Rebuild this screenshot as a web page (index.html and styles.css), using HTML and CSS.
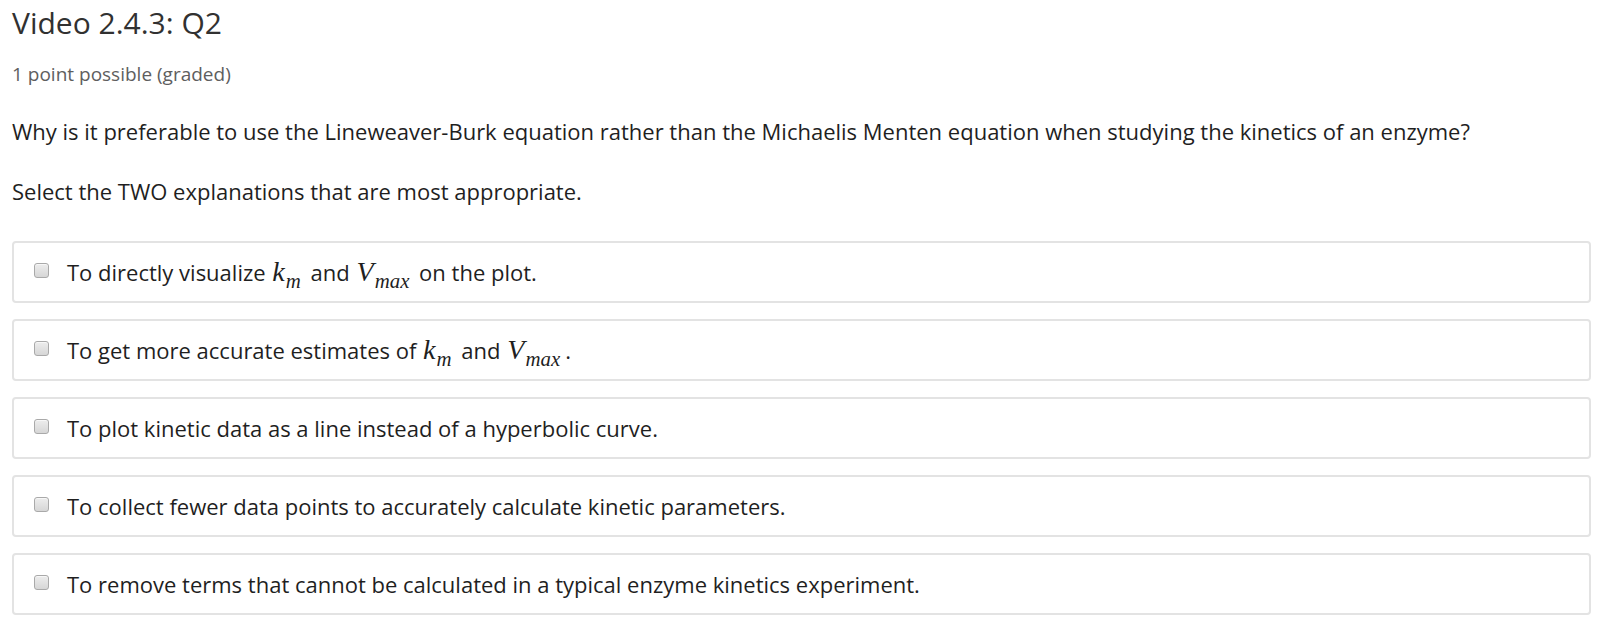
FILE: index.html
```html
<!DOCTYPE html>
<html lang="en">
<head>
<meta charset="utf-8">
<title>Video 2.4.3: Q2</title>
<link rel="stylesheet" href="styles.css">
</head>
<body>
<div class="problem">
  <h3 class="problem-title">Video 2.4.3: Q2</h3>
  <div class="problem-progress">1 point possible (graded)</div>
  <p class="question">Why is it preferable to use the Lineweaver-Burk equation rather than the Michaelis Menten equation when studying the kinetics of an enzyme?</p>
  <p class="question instruction">Select the TWO explanations that are most appropriate.</p>
  <div class="choices">
    <label class="choice"><input type="checkbox" class="check"><span class="choice-text">To directly visualize <span class="math"><i>k</i><sub>m</sub></span> and <span class="math"><i>V</i><sub>max</sub></span> on the plot.</span></label>
    <label class="choice"><input type="checkbox" class="check"><span class="choice-text">To get more accurate estimates of <span class="math"><i>k</i><sub>m</sub></span> and <span class="math"><i>V</i><sub>max</sub></span><span class="math-dot">.</span></span></label>
    <label class="choice"><input type="checkbox" class="check"><span class="choice-text">To plot kinetic data as a line instead of a hyperbolic curve.</span></label>
    <label class="choice"><input type="checkbox" class="check"><span class="choice-text">To collect fewer data points to accurately calculate kinetic parameters.</span></label>
    <label class="choice"><input type="checkbox" class="check"><span class="choice-text">To remove terms that cannot be calculated in a typical enzyme kinetics experiment.</span></label>
  </div>
</div>
</body>
</html>
```

FILE: styles.css
```css
html, body {
  margin: 0;
  padding: 0;
  background: #ffffff;
}

body {
  font-family: "Open Sans", "Liberation Sans", sans-serif;
  color: #313131;
}

.problem {
  padding: 3px 9px 0 12px;
}

.problem-title {
  margin: 0;
  font-size: 30px;
  line-height: 40px;
  font-weight: 400;
  color: #313131;
}

.problem-progress {
  margin-top: 18px;
  font-size: 19px;
  line-height: 26px;
  color: #5e5e5e;
}

.question {
  margin: 29px 0 0;
  font-size: 22px;
  line-height: 30px;
  color: #1f1f1f;
}

.instruction {
  margin-top: 30px;
}

.choices {
  margin-top: 35px;
  display: flex;
  flex-direction: column;
  gap: 16px;
}

.choice {
  display: flex;
  align-items: center;
  height: 58px;
  padding: 0 20px;
  border: 2px solid #e3e3e3;
  border-radius: 4px;
  font-size: 22px;
  color: #1f1f1f;
}

.check {
  appearance: none;
  -webkit-appearance: none;
  box-sizing: border-box;
  width: 15px;
  height: 15px;
  margin: 0 18px 0 0;
  flex: none;
  border: 1px solid #a9a9a9;
  border-radius: 3px;
  background: linear-gradient(#ededed, #d6d6d6);
  box-shadow: inset 0 1px 0 #f7f7f7;
  position: relative;
  top: -2px;
}

.choice-text {
  line-height: 30px;
}

.math {
  font-family: "Liberation Serif", "DejaVu Serif", serif;
  font-size: 1.28em;
  margin: 0 4px 0 1px;
}

.math i {
  font-style: italic;
}

.math sub {
  font-style: italic;
  font-size: 0.74em;
  vertical-align: -0.32em;
  line-height: 0;
  margin-left: 1px;
}

.math-dot {
  margin-left: 1px;
}
```
